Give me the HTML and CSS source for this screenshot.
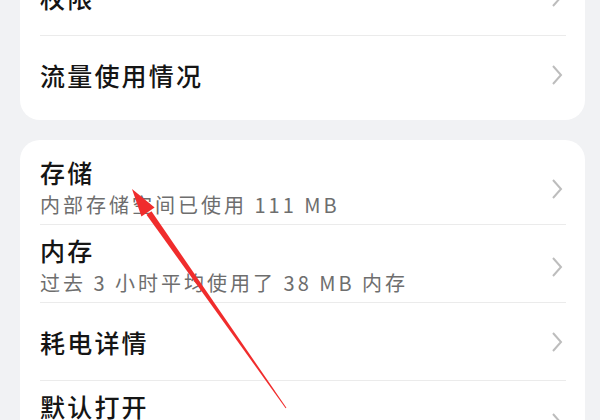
FILE: index.html
```html
<!DOCTYPE html>
<html lang="zh-CN">
<head>
    <meta charset="UTF-8">
    <meta name="viewport" content="width=device-width, initial-scale=1.0">
    <title>应用信息</title>
    <link rel="stylesheet" href="styles.css">
</head>
<body>
    <div class="page">
        <!-- 第一组 -->
        <div class="card card-top">
            <div class="row single">
                <div class="text"><div class="title">权限</div></div>
                <svg class="chevron" viewBox="0 0 12 22"><polyline points="2,2 10,11 2,20"/></svg>
            </div>
            <div class="row single">
                <div class="text"><div class="title">流量使用情况</div></div>
                <svg class="chevron" viewBox="0 0 12 22"><polyline points="2,2 10,11 2,20"/></svg>
            </div>
        </div>

        <!-- 第二组 -->
        <div class="card">
            <div class="row">
                <div class="text">
                    <div class="title">存储</div>
                    <div class="sub">内部存储空间已使用 111 MB</div>
                </div>
                <svg class="chevron" viewBox="0 0 12 22"><polyline points="2,2 10,11 2,20"/></svg>
            </div>
            <div class="row">
                <div class="text">
                    <div class="title">内存</div>
                    <div class="sub">过去 3 小时平均使用了 38 MB 内存</div>
                </div>
                <svg class="chevron" viewBox="0 0 12 22"><polyline points="2,2 10,11 2,20"/></svg>
            </div>
            <div class="row single">
                <div class="text"><div class="title">耗电详情</div></div>
                <svg class="chevron" viewBox="0 0 12 22"><polyline points="2,2 10,11 2,20"/></svg>
            </div>
            <div class="row">
                <div class="text">
                    <div class="title">默认打开</div>
                    <div class="sub">未设置默认操作</div>
                </div>
                <svg class="chevron" viewBox="0 0 12 22"><polyline points="2,2 10,11 2,20"/></svg>
            </div>
        </div>
    </div>

    <!-- 标注箭头 -->
    <svg class="arrow" viewBox="0 0 600 420">
        <polygon points="286.4,407.7 285.6,408.3 146.5,214.7 151.5,211.3"/>
        <polygon points="132,189 154.6,207.4 141.4,216.6"/>
    </svg>
</body>
</html>
```

FILE: styles.css
```css
body {
    margin: 0;
    padding: 0;
    background-color: #f1f2f4;
    font-family: "Noto Sans CJK SC", "Noto Sans", sans-serif;
    overflow: hidden;
}
.page {
    padding: 0 15px 0 20px;
}
.card {
    background: #fff;
    border-radius: 20px;
    padding: 7px 0;
    margin-bottom: 20px;
}
.card-top {
    margin-top: -49px;
}
.row {
    display: flex;
    align-items: center;
    margin: 0 19px 0 20px;
    min-height: 66px;
    padding: 9px 0 2px;
}
.row.single {
    padding: 6px 0 5px;
}
.row + .row {
    border-top: 1px solid #ebebeb;
}
.text {
    flex: 1;
}
.title {
    font-size: 25px;
    line-height: 32px;
    letter-spacing: 2.2px;
    font-weight: 500;
    color: #151515;
}
.sub {
    font-size: 20px;
    line-height: 34px;
    letter-spacing: 3px;
    color: #6e6e6e;
}
.chevron {
    width: 12px;
    height: 22px;
    margin-right: 3px;
}
.chevron polyline {
    fill: none;
    stroke: #bdbdbd;
    stroke-width: 2;
}
.arrow {
    position: absolute;
    top: 0;
    left: 0;
    width: 600px;
    height: 420px;
}
.arrow polygon {
    fill: #f02c2c;
}
```
